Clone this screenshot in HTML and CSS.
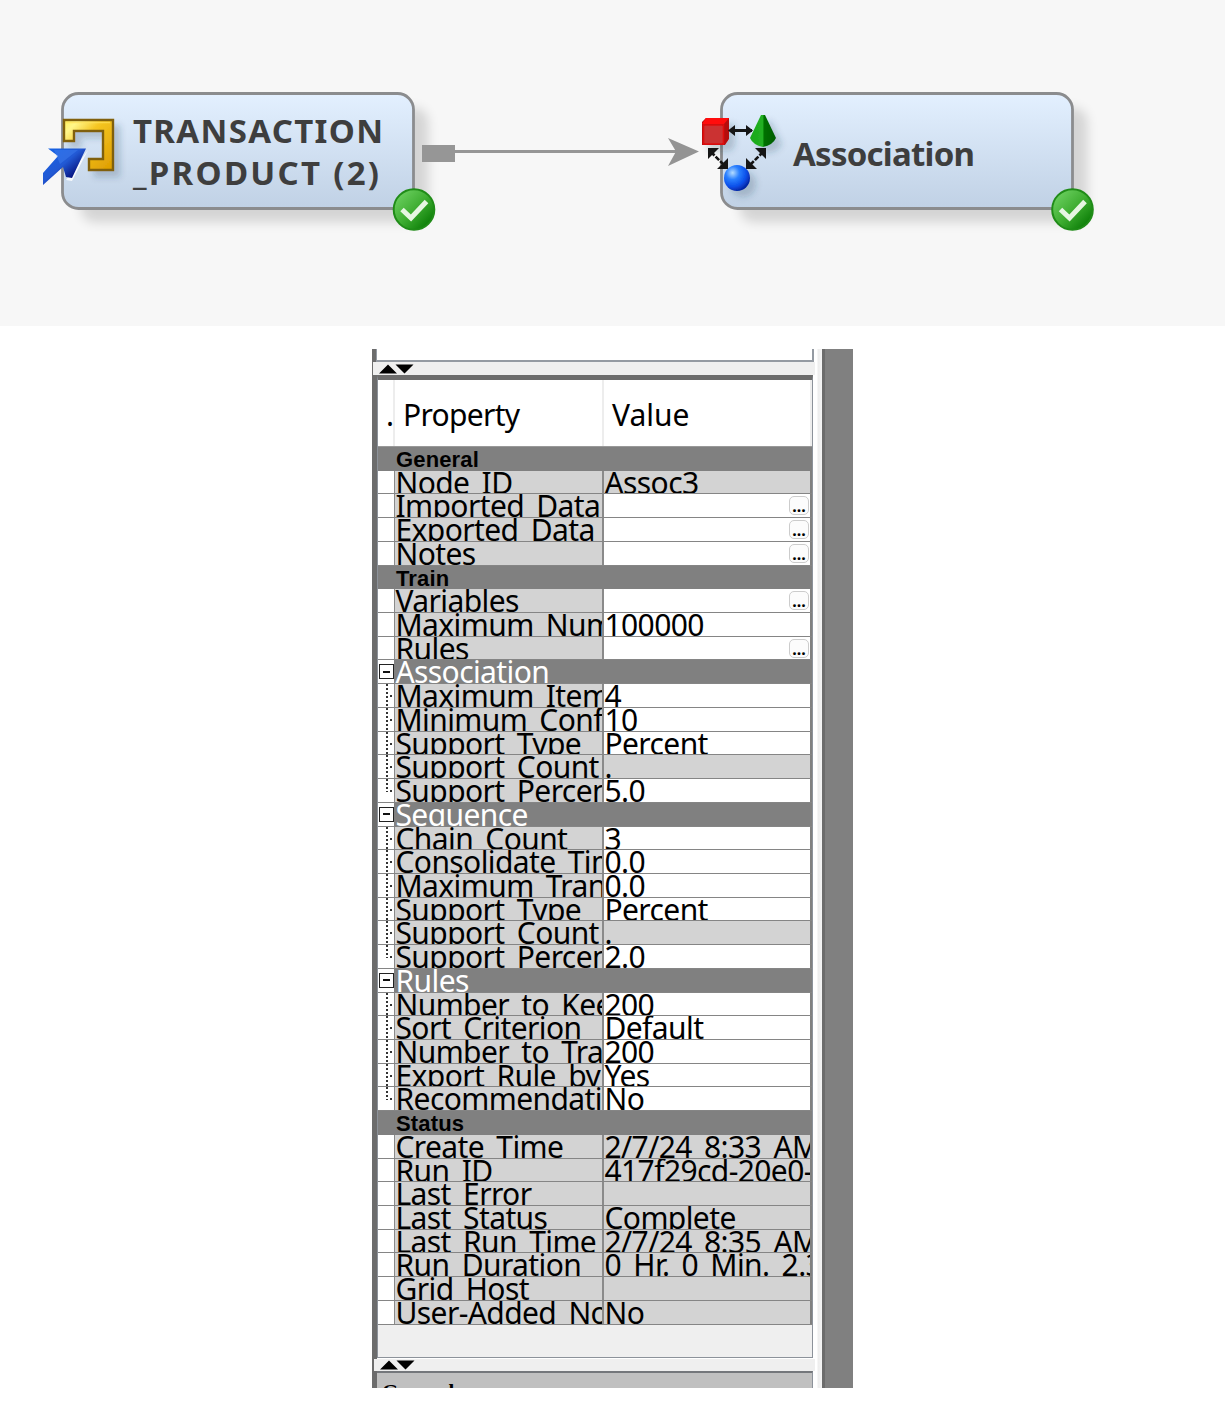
FILE: index.html
```html
<!DOCTYPE html>
<html lang="en">
<head>
<meta charset="utf-8">
<title>Association node properties</title>
<link rel="stylesheet" href="styles.css">
</head>
<body>
<svg class="diagram" width="1225" height="326" viewBox="0 0 1225 326">
  <defs>
    <linearGradient id="box" x1="0" y1="0" x2="0" y2="1"><stop offset="0" stop-color="#e3f0ff"/><stop offset="1" stop-color="#c0d1e5"/></linearGradient>
    <linearGradient id="gold" x1="0" y1="0" x2="1" y2="1"><stop offset="0" stop-color="#fff45c"/><stop offset=".15" stop-color="#fff68a"/><stop offset=".4" stop-color="#f5c521"/><stop offset="1" stop-color="#dc9c00"/></linearGradient>
    <linearGradient id="arrow" x1="0" y1="0" x2="1" y2="1"><stop offset="0" stop-color="#1464e6"/><stop offset=".45" stop-color="#2259d4"/><stop offset=".75" stop-color="#04107c"/></linearGradient>
    <linearGradient id="ok" x1="0" y1="0" x2="1" y2="1"><stop offset=".1" stop-color="#6cd060"/><stop offset=".5" stop-color="#3fae32"/><stop offset=".9" stop-color="#087a04"/></linearGradient>
    <linearGradient id="cone" x1="0" y1="0" x2="1" y2="0"><stop offset="0" stop-color="#1aa81a"/><stop offset=".48" stop-color="#22b022"/><stop offset=".55" stop-color="#047004"/><stop offset="1" stop-color="#045c04"/></linearGradient>
    <radialGradient id="ball" cx=".33" cy=".3" r=".75"><stop offset="0" stop-color="#b4dcff"/><stop offset=".35" stop-color="#2a80ff"/><stop offset=".7" stop-color="#0b50ea"/><stop offset="1" stop-color="#04209c"/></radialGradient>
    <filter id="shadow" x="-10%" y="-20%" width="125%" height="150%"><feGaussianBlur stdDeviation="6"/></filter>
    <filter id="soft" x="-30%" y="-30%" width="170%" height="170%"><feDropShadow dx="6" dy="6" stdDeviation="3" flood-color="#2c4058" flood-opacity=".22"/></filter>
    <g id="node">
      <rect x="20" y="16" width="347" height="114" rx="14" fill="#000" opacity=".14" filter="url(#shadow)"/>
      <rect x="1.500" y="1.500" width="351" height="115" rx="16" fill="url(#box)" stroke="#8b8c8e" stroke-width="2.800"/>
    </g>
    <g id="check">
      <circle cx="0" cy="0" r="20.300" fill="url(#ok)" stroke="#208c18" stroke-width="2"/>
      <path d="M-12 0L-3 8.500L12.500-8" fill="none" stroke="#e6f6e2" stroke-width="5"/>
    </g>
  </defs>
  <rect width="1225" height="326" fill="#f7f7f7"/>
  <use href="#node" x="61" y="92"/>
  <use href="#node" x="720" y="92"/>
  <path d="M454 151.500H676" stroke="#969696" stroke-width="3"/>
  <rect x="422" y="145" width="33" height="17" fill="#969696"/>
  <path d="M668 138L699 151.500L668 166L676 151.500Z" fill="#949494"/>

  <g filter="url(#soft)">
    <path d="M64 120H113V170H89V159H103V131H74V141H64Z" fill="url(#gold)" stroke="#80600c" stroke-width="2.400"/>
    <path d="M66 122.500H110" stroke="#ffe25a" stroke-width="1.500" opacity=".7"/>
  </g>
  <path d="M66 180L88 150L72 181Z" fill="#fff" opacity=".85"/>
  <path d="M48 148.500L86 148.500L72 178L66 177L63 167L43 185V173L58 156Z" fill="url(#arrow)"/>
  <path d="M54 150H78L60 164Z" fill="#4888f4" opacity=".4"/>

  <g filter="url(#soft)">
    <path d="M702 122L706 118H729V139L725 145H702Z" fill="#b50b0b"/>
    <path d="M702 124L706 118H729L724 124Z" fill="#ff0a0a"/>
    <rect x="703.500" y="125" width="20" height="19" fill="#cb3030" stroke="#e00808" stroke-width="1.500"/>
    <path d="M761 115H765L776 138Q773 145 763 147Q753 145 750 138Z" fill="url(#cone)"/>
    <circle cx="737" cy="178" r="13" fill="url(#ball)"/>
  </g>
  <g fill="#151515" stroke="#151515">
    <path d="M730 130.500H752" stroke-width="3"/>
    <path d="M728 130.500L735 125V136ZM753 130.500L746 125V136Z" stroke="none"/>
    <path d="M711 152L725 166M763 152L749 166" stroke-width="2.600" stroke-dasharray="5 1.500"/>
    <path d="M708 148H719L708 159ZM728 169V158L717 169ZM766 148H755L766 159ZM746 169V158L757 169Z" stroke="none"/>
  </g>
  <use href="#check" x="414" y="209.500"/>
  <use href="#check" x="1072.500" y="209.500"/>
  <g class="node-label">
    <text x="133" y="143" textLength="250">TRANSACTION</text>
    <text x="133" y="184.500" textLength="246">_PRODUCT (2)</text>
    <text x="793" y="165.500" textLength="182">Association</text>
  </g>
</svg>

<main class="panel">
  <section class="pane">
    <div class="upper"></div>
    <div class="splitter"><svg width="36" height="10" viewBox="0 0 36 10"><path d="M0 9.500L9 .5L18 9.500ZM16.500 .5H34.500L25.500 9.500Z"/></svg></div>
    <div class="table">
      <div class="head"><div>.</div><div>Property</div><div class="value">Value</div></div>
      <div class="band">General</div>
      <div class="row off"><i></i><span>Node ID</span><b>Assoc3</b></div>
      <div class="row"><i></i><span>Imported Data</span><b><button>...</button></b></div>
      <div class="row"><i></i><span>Exported Data</span><b><button>...</button></b></div>
      <div class="row"><i></i><span>Notes</span><b><button>...</button></b></div>
      <div class="band">Train</div>
      <div class="row"><i></i><span>Variables</span><b><button>...</button></b></div>
      <div class="row"><i></i><span>Maximum Number</span><b>100000</b></div>
      <div class="row"><i></i><span>Rules</span><b><button>...</button></b></div>
      <div class="row group"><i></i><span>Association</span></div>
      <div class="row kid"><i></i><span>Maximum Items</span><b>4</b></div>
      <div class="row kid"><i></i><span>Minimum Confidence</span><b>10</b></div>
      <div class="row kid"><i></i><span>Support Type</span><b>Percent</b></div>
      <div class="row kid off"><i></i><span>Support Count</span><b>.</b></div>
      <div class="row kid last"><i></i><span>Support Percent</span><b>5.0</b></div>
      <div class="row group"><i></i><span>Sequence</span></div>
      <div class="row kid"><i></i><span>Chain Count</span><b>3</b></div>
      <div class="row kid"><i></i><span>Consolidate Time</span><b>0.0</b></div>
      <div class="row kid"><i></i><span>Maximum Transaction</span><b>0.0</b></div>
      <div class="row kid"><i></i><span>Support Type</span><b>Percent</b></div>
      <div class="row kid off"><i></i><span>Support Count</span><b>.</b></div>
      <div class="row kid last"><i></i><span>Support Percent</span><b>2.0</b></div>
      <div class="row group"><i></i><span>Rules</span></div>
      <div class="row kid"><i></i><span>Number to Keep</span><b>200</b></div>
      <div class="row kid"><i></i><span>Sort Criterion</span><b>Default</b></div>
      <div class="row kid"><i></i><span>Number to Transpose</span><b>200</b></div>
      <div class="row kid"><i></i><span>Export Rule by ID</span><b>Yes</b></div>
      <div class="row kid last"><i></i><span>Recommendation</span><b>No</b></div>
      <div class="band">Status</div>
      <div class="row off"><i></i><span>Create Time</span><b>2/7/24 8:33 AM</b></div>
      <div class="row off"><i></i><span>Run ID</span><b>417f29cd-20e0-</b></div>
      <div class="row off"><i></i><span>Last Error</span><b></b></div>
      <div class="row off"><i></i><span>Last Status</span><b>Complete</b></div>
      <div class="row off"><i></i><span>Last Run Time</span><b>2/7/24 8:35 AM</b></div>
      <div class="row off"><i></i><span>Run Duration</span><b>0 Hr. 0 Min. 2.3</b></div>
      <div class="row off"><i></i><span>Grid Host</span><b></b></div>
      <div class="row off"><i></i><span>User-Added Node</span><b>No</b></div>
    </div>
    <div class="splitter low"><svg width="36" height="10" viewBox="0 0 36 10"><path d="M0 9.500L9 .5L18 9.500ZM16.500 .5H34.500L25.500 9.500Z"/></svg></div>
    <div class="help">General</div>
  </section>
  <div class="gutter"></div>
  <div class="edge"></div>
</main>
</body>
</html>
```

FILE: styles.css
```css
* { box-sizing: border-box; }
body { margin: 0; background: #fff; color: #000; font-family: "Noto Sans", sans-serif; }
.diagram { display: block; }
.node-label { font: bold 33px "Noto Sans", sans-serif; fill: #3e3e3e; }

.panel { display: flex; width: 481px; height: 1039px; margin: 23px 0 0 372px; overflow: hidden; }
.pane { display: flex; flex-direction: column; width: 443px; background: linear-gradient(90deg, #6c6c6c 5px, #fff 5px); }
.gutter { width: 7px; background: linear-gradient(90deg, #fff 2px, #ededed 3px, #f4f4f4 7px); }
.edge { flex: 1; background: #808080; border-left: 3px solid #6c6c6c; }

.upper { height: 13px; width: 438px; margin-left: 4px; background: #fff; border: solid #949aa2; border-width: 0 2px 2px 1px; }
.splitter { height: 13px; margin-left: 1px; padding: 2px 0 0 6px; background: #efefef; }
.splitter svg { display: block; }
.table { height: 983px; width: 436px; margin-left: 5px; border: 1px solid #8c929a; border-top: 5px solid #6c6c6c; background: #efefef; overflow: hidden; }

.head { display: grid; grid-template-columns: 17px 209px 1fr; height: 67px; background: #fff; border-bottom: 1px solid #999; font-size: 30px; line-height: 70px; letter-spacing: -.7px; overflow: hidden; }
.head div { height: 66px; border-right: 2px solid #ededed; padding-left: 8px; white-space: nowrap; }
.head .value { letter-spacing: 0; }

.band { height: 23.73px; padding-left: 18px; background: #808080; font: bold 22px/26px "Liberation Sans", sans-serif; letter-spacing: .15px; }
.row { display: grid; grid-template-columns: 16px 210px 1fr; height: 23.73px; padding-right: 2px; background: #808080; font-size: 30px; line-height: 24px; letter-spacing: -.6px; word-spacing: 5px; border-bottom: 1.500px solid #858585; }
.row i { background: #fff; }
.row span, .row b { height: 100%; min-height: 0; overflow: hidden; white-space: nowrap; font-weight: normal; }
.row span { background: #d3d3d3; border: solid #8a8a8a; border-width: 0 2px 0 1px; padding-left: .5px; }
.row b { background: #fff; padding-left: .5px; }
.row.off b { background: #d3d3d3; }
.row button { display: block; margin: 2px 1px 0 auto; width: 20px; height: 19px; padding: 0; border: 1px solid #ccc; border-radius: 5px; background: #fcfcfc; font: bold 16px/18px "Noto Sans", sans-serif; color: #000; }

.group span { background: #808080; border-color: #808080; color: #fff; }
.group i { display: grid; place-items: center; }
.group i::before { content: ""; width: 13px; height: 13px; border: 1.500px solid #222; background: linear-gradient(#111, #111) center / 7px 2px no-repeat; }
.kid i { background: repeating-linear-gradient(#333 0 2px, #fff 2px 4px) 8px 0 / 2px 100% no-repeat, repeating-linear-gradient(90deg, #333 0 2px, #fff 2px 4px) 8px 11px / 8px 2px no-repeat, #fff; }
.kid.last i { background-size: 2px 12px, 8px 2px, auto; }

.low { margin-left: 2px; height: 12px; padding: 1px 0 0 6px; margin-top: 1px; }
.help { height: 17px; width: 436px; margin-left: 5px; padding: 8px 0 0 5px; overflow: hidden; background: #c0c0c0; border-top: 2px solid #74777b; border-right: 1px solid #8c929a; font: bold 21px/22px "Liberation Serif", serif; }
```
